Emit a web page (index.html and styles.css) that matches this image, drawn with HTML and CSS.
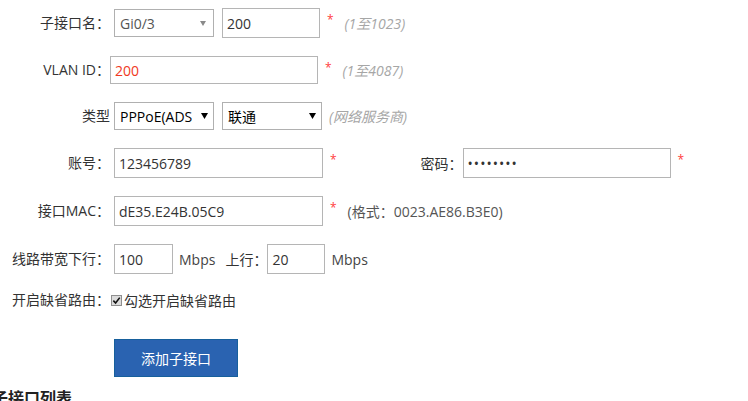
FILE: index.html
```html
<!DOCTYPE html>
<html lang="zh-CN">
<head>
<meta charset="utf-8">
<title>添加子接口</title>
<link rel="stylesheet" href="styles.css">
</head>
<body>
<form class="form">
  <div class="row">
    <span class="lbl">子接口名：</span>
    <span class="sel sel-muted">
      <select class="sel-box w100"><option>Gi0/3</option></select>
      <svg class="sel-arrow small" viewBox="0 0 6 5"><path d="M0 0H6L3 5Z"/></svg>
    </span>
    <input class="txt w98 ml8" type="text" value="200">
    <span class="req">*</span>
    <span class="hint">(1至1023)</span>
  </div>

  <div class="row row-h28">
    <span class="lbl lbl-tight">VLAN ID：</span>
    <input class="txt w208 h28 red" type="text" value="200">
    <span class="req">*</span>
    <span class="hint">(1至4087)</span>
  </div>

  <div class="row row-h28">
    <span class="lbl">类型</span>
    <span class="sel">
      <select class="sel-box w100 dark"><option>PPPoE(ADSL拨号)</option></select>
      <svg class="sel-arrow" viewBox="0 0 7 6"><path d="M0 0H7L3.5 6Z"/></svg>
    </span>
    <span class="sel ml8">
      <select class="sel-box w100 dark"><option>联通</option></select>
      <svg class="sel-arrow" viewBox="0 0 7 6"><path d="M0 0H7L3.5 6Z"/></svg>
    </span>
    <span class="hint hint-near">(网络服务商)</span>
  </div>

  <div class="row">
    <span class="lbl">账号：</span>
    <input class="txt w209" type="text" value="123456789">
    <span class="req">*</span>
    <span class="lbl-inline pwd-lbl">密码：</span>
    <input class="txt w208 pwd" type="password" value="12345678">
    <span class="req">*</span>
  </div>

  <div class="row">
    <span class="lbl">接口MAC：</span>
    <input class="txt w209" type="text" value="dE35.E24B.05C9">
    <span class="req">*</span>
    <span class="note">(格式：0023.AE86.B3E0)</span>
  </div>

  <div class="row">
    <span class="lbl">线路带宽下行：</span>
    <input class="txt w59" type="text" value="100">
    <span class="unit">Mbps</span>
    <span class="lbl-inline up-lbl">上行：</span>
    <input class="txt w58" type="text" value="20">
    <span class="unit">Mbps</span>
  </div>

  <div class="row row-check">
    <span class="lbl lbl-tight">开启缺省路由：</span>
    <label class="check">
      <span class="check-box">
        <svg viewBox="0 0 10 10"><path d="M1.5 5.2L4 7.8L8.6 1.8" /></svg>
      </span>
      <span>勾选开启缺省路由</span>
    </label>
  </div>

  <div class="row row-btn">
    <span class="lbl"></span>
    <button class="btn" type="button">添加子接口</button>
  </div>
</form>

<h3 class="section-title">子接口列表</h3>
</body>
</html>
```

FILE: styles.css
```css
html, body {
  margin: 0;
  padding: 0;
  background: #fff;
}

body {
  font-family: "Open Sans", "Noto Sans CJK SC", sans-serif;
  font-size: 14px;
  color: #333;
  overflow: hidden;
}

.form {
  display: flex;
  flex-direction: column;
  gap: 18px;
  padding-top: 8px;
}

.row {
  display: flex;
  align-items: center;
  height: 30px;
}

.row-h28 {
  height: 28px;
}

.lbl {
  width: 110px;
  flex: none;
  text-align: right;
  margin-right: 4px;
  white-space: nowrap;
  line-height: 20px;
}

.lbl-tight {
  margin-right: 0;
}

.lbl-inline {
  white-space: nowrap;
}

/* text fields */
.txt {
  box-sizing: border-box;
  height: 30px;
  margin: 0;
  padding: 0 4px;
  border: 1px solid #b5b5b5;
  border-radius: 0;
  background: #fff;
  font: inherit;
  color: #333;
  outline: none;
}

.txt.h28 { height: 28px; }
.txt.red { color: #f0391e; }
.txt.pwd { letter-spacing: 1px; padding-left: 4px; }

.w58 { width: 58px; }
.w59 { width: 59px; }
.w98 { width: 98px; }
.w100 { width: 100px; }
.w208 { width: 208px; }
.w209 { width: 209px; }
.ml8 { margin-left: 8px; }

/* drop-downs with a drawn arrow */
.sel {
  position: relative;
  display: inline-flex;
  flex: none;
}

.sel-box {
  -webkit-appearance: none;
  appearance: none;
  box-sizing: border-box;
  height: 28px;
  margin: 0;
  padding: 0 21px 0 5px;
  border: 1px solid #b0b0b0;
  border-radius: 0;
  background: #fff;
  font: inherit;
  color: #555;
  outline: none;
}

.sel-box.dark { color: #000; }

.sel-arrow {
  position: absolute;
  right: 6px;
  top: 11px;
  width: 7px;
  height: 6px;
  fill: #000;
  pointer-events: none;
}

.sel-arrow.small {
  width: 6px;
  height: 5px;
  right: 8px;
  top: 12px;
  fill: #8a8a8a;
}

/* markers and hints */
.req {
  color: #ff3b3b;
  margin-left: 7px;
  align-self: flex-start;
  font-size: 12px;
  line-height: 20px;
  padding-top: 2px;
}

.hint {
  margin-left: 11px;
  font-style: italic;
  color: #a6a6a6;
}

.hint-near {
  margin-left: 7px;
}

.note {
  margin-left: 11px;
  color: #555;
}

.pwd-lbl {
  margin-left: 84px;
  margin-right: 0;
}

.unit {
  margin-left: 6px;
  color: #444;
}

.up-lbl {
  margin-left: 10px;
}

/* checkbox row */
.row-check {
  height: 20px;
  margin-top: -2px;
}

.check {
  display: flex;
  align-items: center;
  margin-left: 1px;
  white-space: nowrap;
}

.check-box {
  box-sizing: border-box;
  width: 11px;
  height: 11px;
  margin-right: 2px;
  border: 1px solid #8f8f8f;
  background: #dcdcdc;
  display: flex;
}

.check-box svg {
  width: 9px;
  height: 9px;
  fill: none;
  stroke: #111;
  stroke-width: 1.8;
}

/* submit */
.row-btn {
  height: 38px;
  margin-top: 11px;
}

.btn {
  box-sizing: border-box;
  width: 124px;
  height: 38px;
  margin: 0;
  border: 1px solid #17609c;
  background: #2a63b1;
  color: #fff;
  font: inherit;
  font-size: 14px;
  cursor: pointer;
}

.section-title {
  margin: 10px 0 0 -8px;
  font-size: 16px;
  font-weight: bold;
  color: #222;
  line-height: 22px;
}
```
